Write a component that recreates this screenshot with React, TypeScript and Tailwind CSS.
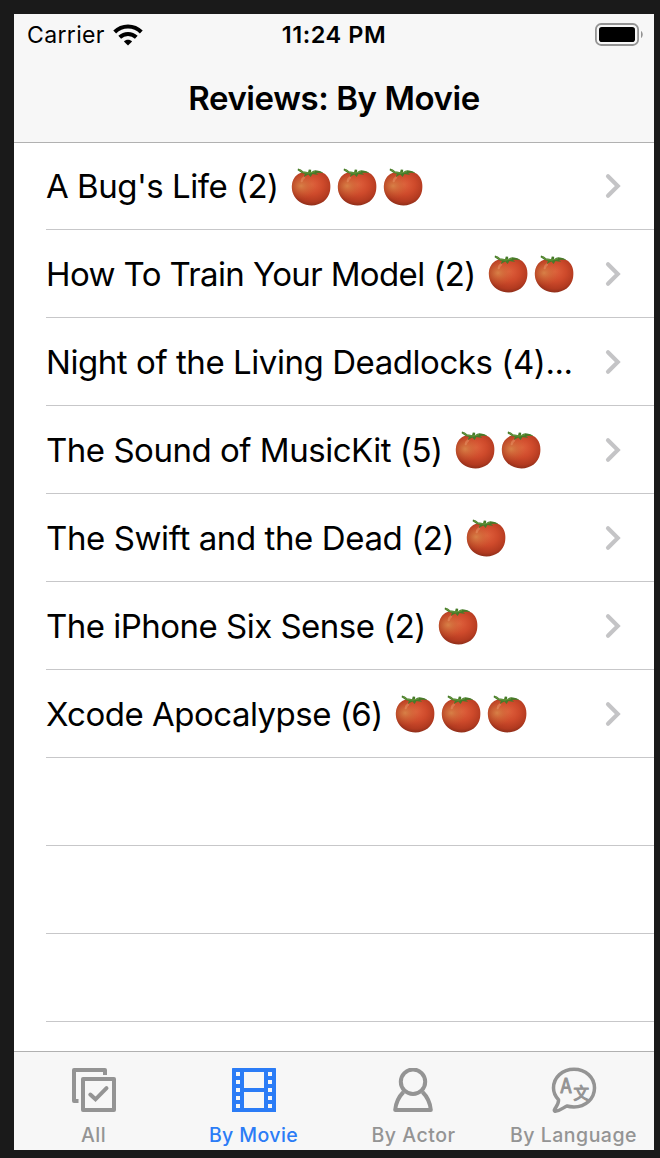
import type { ReactNode } from "react";

type Movie = { title: string; spacing: string; tomatoes: number };

const movies: Movie[] = [
  { title: "A Bug's Life (2)", spacing: "tracking-[-0.5px]", tomatoes: 3 },
  { title: "How To Train Your Model (2)", spacing: "tracking-[-0.62px]", tomatoes: 2 },
  { title: "Night of the Living Deadlocks (4)...", spacing: "tracking-[-0.44px]", tomatoes: 0 },
  { title: "The Sound of MusicKit (5)", spacing: "tracking-[-0.48px]", tomatoes: 2 },
  { title: "The Swift and the Dead (2)", spacing: "tracking-[-0.4px]", tomatoes: 1 },
  { title: "The iPhone Six Sense (2)", spacing: "tracking-[-0.52px]", tomatoes: 1 },
  { title: "Xcode Apocalypse (6)", spacing: "tracking-[-0.5px]", tomatoes: 3 },
];

function TomatoPaints() {
  return (
    <svg width="0" height="0" className="absolute" aria-hidden="true">
      <defs>
        <radialGradient id="skin" cx="0.52" cy="0.38" r="0.64">
          <stop offset="0" stopColor="#e0613d" />
          <stop offset="0.45" stopColor="#ce4a2b" />
          <stop offset="0.8" stopColor="#b23a20" />
          <stop offset="1" stopColor="#8a2d19" />
        </radialGradient>
        <radialGradient id="glow" cx="0.24" cy="0.42" r="0.4">
          <stop offset="0" stopColor="#d98a4c" stopOpacity="0.85" />
          <stop offset="1" stopColor="#c8602f" stopOpacity="0" />
        </radialGradient>
      </defs>
    </svg>
  );
}

function Tomato() {
  const body =
    "M20 5.2C25 2.8 32.5 3.2 36 8C39.3 12 40 17.5 39 23C37.5 31.5 30 37.4 20.5 37.4C13 37.4 7 34 3.5 28.5C0.5 23.5 0 17 2.2 12C5.5 5 13 2.2 20 5.2Z";
  return (
    <svg width="40" height="40" viewBox="0 0 40 40">
      <path d={body} fill="url(#skin)" />
      <path d={body} fill="url(#glow)" />
      <path d="M13 9.5Q11 11 10.8 13" stroke="#f0a478" strokeWidth="2.4" opacity="0.4" fill="none" strokeLinecap="round" />
      <path d="M7 0.6Q10 1.2 12.4 3.6Q14.5 3.2 17 4.2L17.8 1.6L20.2 1.7L20 4.2Q23 1.6 26 2.4Q30 2.6 32.4 5Q28 4.4 25 5L27.2 6.8Q24 6.8 21.5 6L19.6 9L17.4 6.6L12.6 9L14 6Q10 5 6.6 2.2Z" fill="#467b29" />
      <path d="M8 1.6L12.5 4.6L18 5L24 3.6" stroke="#72a144" strokeWidth="0.8" fill="none" />
    </svg>
  );
}

function Chevron() {
  return (
    <svg width="16" height="26" viewBox="0 0 16 26" fill="none" stroke="#c4c4c6" strokeWidth="4.1" strokeLinecap="round">
      <path d="M3 3.2L12.8 13L3 22.8" strokeLinejoin="miter" />
    </svg>
  );
}

function WifiIcon() {
  return (
    <svg width="30" height="22" viewBox="0 0 30 22" fill="none" stroke="#000" strokeWidth="4">
      <path d="M1.7 8C9 0.7 21 0.7 28.3 8" />
      <path d="M6.7 13.2C11.4 8.8 18.6 8.8 23.3 13.2" />
      <path d="M15 21.5L10.9 17.4C13 15.1 17 15.1 19.1 17.4Z" fill="#000" stroke="none" />
    </svg>
  );
}

function BatteryIcon() {
  return (
    <svg width="48" height="24" viewBox="0 0 48 24">
      <rect x="0.9" y="1" width="42.2" height="21" rx="5.2" fill="none" stroke="#949494" strokeWidth="1.8" />
      <rect x="4" y="4" width="36" height="15" rx="2.8" fill="#000" />
      <path d="M46 8C48.3 9.2 48.3 13.8 46 15Z" fill="#949494" />
    </svg>
  );
}

function AllIcon() {
  return (
    <svg width="44" height="44" viewBox="0 0 44 44" fill="none" stroke="currentColor" strokeWidth="4" strokeLinejoin="round">
      <path d="M33 7V2H2V33H6.5" />
      <rect x="11" y="11" width="31" height="31" />
      <path d="M18.3 26.5L23.5 31.3L34.5 20.2" strokeLinecap="round" strokeLinejoin="miter" />
    </svg>
  );
}

function FilmIcon() {
  return (
    <svg width="44" height="44" viewBox="0 0 44 44">
      <rect width="44" height="44" rx="0.6" fill="currentColor" />
      <g fill="#f7f7f7">
        <rect x="12" y="4" width="20" height="16" />
        <rect x="12" y="24" width="20" height="16" />
        {[4, 12, 20, 28, 36].map((y) => (
          <g key={y}>
            <rect x="4" y={y} width="4" height="4" />
            <rect x="36" y={y} width="4" height="4" />
          </g>
        ))}
      </g>
    </svg>
  );
}

function ActorIcon() {
  return (
    <svg width="42" height="44" viewBox="0 0 42 44" className="mr-[2px]" fill="none" stroke="currentColor" strokeWidth="4" strokeLinejoin="round">
      <circle cx="21" cy="13.7" r="12.2" />
      <path d="M11.5 24C6.5 29 3.8 35 3.2 42H38.8C38.2 35 35.5 29 30.5 24" />
    </svg>
  );
}

function LanguageIcon() {
  return (
    <svg width="46" height="46" viewBox="0 0 46 46">
      <path
        d="M23 2.2C11.5 2.2 2.5 10.4 2.5 21C2.5 25.5 4.5 29.5 7.5 32.7C8 36.5 5 39.8 3.5 42.7C3 44 4 44.3 5 44.1C9.5 43.5 12.5 40.5 15.8 39C18 39.7 20.5 39.9 23 39.9C34.5 39.9 43.5 31.6 43.5 21C43.5 10.4 34.5 2.2 23 2.2Z"
        fill="none"
        stroke="currentColor"
        strokeWidth="3.5"
        strokeLinejoin="round"
      />
      <g fill="currentColor" stroke="currentColor" strokeLinejoin="round" fontFamily="'Noto Sans CJK SC', sans-serif" fontWeight="400">
        <text x="9.6" y="25.8" fontSize="19.5" strokeWidth="1" textLength="11" lengthAdjust="spacingAndGlyphs">A</text>
        <text x="22.6" y="31.8" fontSize="15.5" strokeWidth="1.1">文</text>
      </g>
    </svg>
  );
}

function Tab({ label, spacing, active, children }: { label: string; spacing: string; active?: boolean; children: ReactNode }) {
  return (
    <button className={`flex w-40 flex-col items-center pt-4 ${active ? "text-[#2b7cf6]" : "text-[#949494]"}`}>
      <span className="flex h-11 items-center justify-center">{children}</span>
      <span className={`mt-[11px] mr-px whitespace-nowrap text-[19.5px] leading-6 font-medium ${spacing}`}>{label}</span>
    </button>
  );
}

export default function App() {
  return (
    <div className="h-[1158px] w-[660px] overflow-hidden bg-[#1a1a1a] pt-[14px] pl-[14px] font-['Inter',sans-serif] text-black">
      <TomatoPaints />
      <main className="flex h-[1136px] w-[640px] flex-col overflow-hidden bg-white">
        <header className="h-[129px] shrink-0 border-b border-[#b1b1b1] bg-[#f7f7f7]">
          <div className="grid h-[41px] grid-cols-3 items-center">
            <div className="flex items-center pl-[13px]">
              <span className="text-[23px] leading-7 tracking-[0.35px]">Carrier</span>
              <span className="ml-[8px]"><WifiIcon /></span>
            </div>
            <span className="text-center text-[23.5px] leading-7 font-semibold tracking-[0.55px]">11:24 PM</span>
            <span className="flex justify-end pr-[11px]"><BatteryIcon /></span>
          </div>
          <h1 className="mt-[22px] text-center text-[33px] leading-[42px] font-semibold tracking-[-0.42px]">Reviews: By Movie</h1>
        </header>
        <ul className="min-h-0 flex-1 overflow-hidden pl-8">
          {movies.map((m) => (
            <li key={m.title} className="flex h-[88px] items-center border-b border-[#c7c7c9] first:h-[87px]">
              <span className={`whitespace-nowrap text-[33px] leading-[42px] ${m.spacing}`}>{m.title}</span>
              <span className="mt-[3px] ml-3 flex gap-[6px]">
                {Array.from({ length: m.tomatoes }, (_, i) => (
                  <Tomato key={i} />
                ))}
              </span>
              <span className="mr-[33px] ml-auto"><Chevron /></span>
            </li>
          ))}
          {[0, 1, 2].map((n) => (
            <li key={n} className="h-[88px] border-b border-[#c7c7c9]" />
          ))}
        </ul>
        <nav className="flex h-[99px] shrink-0 border-t border-[#b1b1b1] bg-[#f7f7f7]">
          <Tab label="All" spacing="tracking-[0.5px]"><AllIcon /></Tab>
          <Tab label="By Movie" spacing="tracking-[0.4px]" active><FilmIcon /></Tab>
          <Tab label="By Actor" spacing="tracking-[0.5px]"><ActorIcon /></Tab>
          <Tab label="By Language" spacing="tracking-[0.5px]"><LanguageIcon /></Tab>
        </nav>
      </main>
    </div>
  );
}
